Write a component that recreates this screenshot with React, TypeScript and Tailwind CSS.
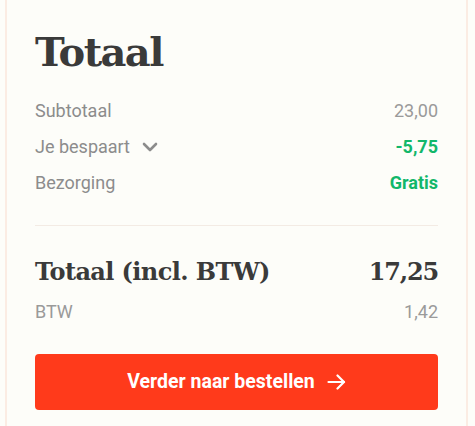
import React from 'react';
import { ChevronDown } from 'lucide-react';

const Row = ({ label, value, green, chevron }: { label: string; value: string; green?: boolean; chevron?: boolean }) => (
  <div className="flex items-center justify-between h-9">
    <span className="flex items-center gap-[8px] text-[18px] text-[#8c8c8c]">
      {label}
      {chevron && <ChevronDown className="w-6 h-6 mt-[1px]" strokeWidth={2.6} />}
    </span>
    <span className={green ? 'text-[18px] font-bold text-[#12b76a]' : 'text-[18px] text-[#9a9a9a]'}>{value}</span>
  </div>
);

const App = () => {
  return (
    <div className="min-h-screen bg-[#fdfdf9] font-['Roboto',sans-serif]">
      <div className="ml-[5px] w-[463px] min-h-[426px] border-x-2 border-[#fbece3] bg-[#fdfdf9] px-[28px] pt-[28px]">
        {/* Kop */}
        <h1 className="h-[48px] text-[40px] leading-[48px] font-bold text-[#3a3a3a] font-['DejaVu_Serif',serif] tracking-[-1.6px]">
          Totaal
        </h1>

        <div className="mt-[16px]">
          <Row label="Subtotaal" value="23,00" />
          <Row label="Je bespaart" value="-5,75" green chevron />
          <Row label="Bezorging" value="Gratis" green />
        </div>

        <div className="mt-[25px] border-t border-[#f3ebe4]" />

        {/* Totaal incl. BTW */}
        <div className="mt-[30px] h-[32px] flex items-center justify-between text-[#3a3a3a] font-['DejaVu_Serif',serif] font-bold text-[24px] tracking-[-0.6px]">
          <span>Totaal (incl. BTW)</span>
          <span className="tracking-[-1.2px]">17,25</span>
        </div>
        <div className="mt-[11px] h-6 flex items-center justify-between text-[18px] text-[#9a9a9a]">
          <span>BTW</span>
          <span>1,42</span>
        </div>

        <button className="mt-[31px] w-full h-[56px] rounded-[4px] bg-[#ff3a1b] text-white text-[19.5px] font-bold flex items-center justify-center gap-3">
          Verder naar bestellen
          <svg width="19" height="16" viewBox="0 0 19 16" fill="none" stroke="currentColor" strokeWidth="2.2" strokeLinecap="round" strokeLinejoin="round">
            <path d="M1.5 8h15.5" />
            <path d="M10.5 1.5L17 8l-6.5 6.5" />
          </svg>
        </button>
      </div>
    </div>
  );
};

export default App;
